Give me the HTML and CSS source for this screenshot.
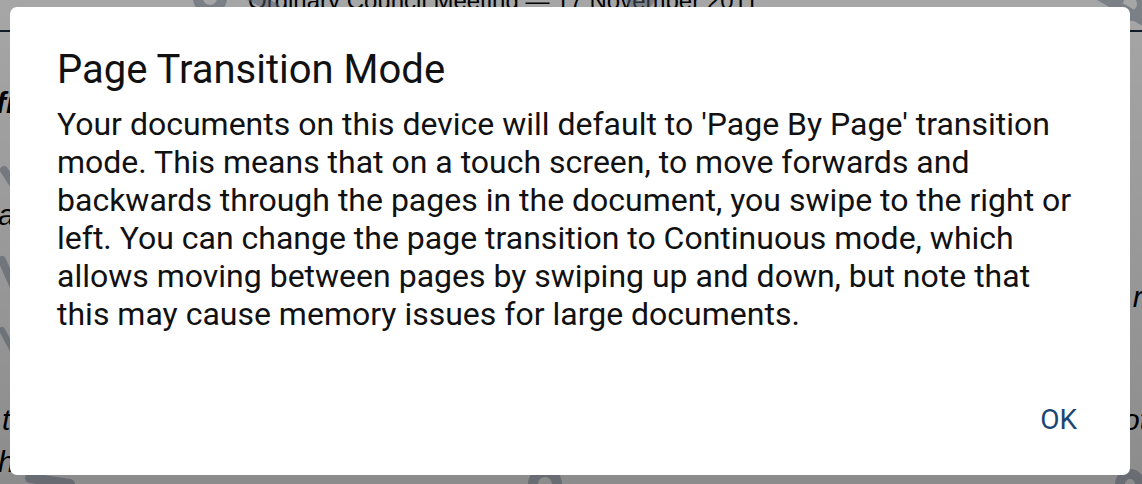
FILE: index.html
```html
<!DOCTYPE html>
<html lang="en">
<head>
<meta charset="utf-8">
<title>Page Transition Mode</title>
<link rel="stylesheet" href="styles.css">
</head>
<body>
<div class="doc">
  <div class="doc-header">Ordinary Council Meeting — 17 November 2011</div>
  <div class="doc-body">
    <p class="bold">fi</p>
    <p class="a">a</p>
    <p class="right">r.</p>
    <p class="row"><span>t</span><span>ot</span></p>
    <p class="last">h  and</p>
  </div>
  <svg class="watermark" width="1142" height="484" viewBox="0 0 1142 484">
    <g fill="none" stroke="#7d8ca3" stroke-width="10" stroke-linecap="round" opacity="0.5">
      <circle cx="210" cy="-2" r="12"/>
      <path d="M250 -4 L275 8"/>
      <circle cx="640" cy="-4" r="10"/>
      <circle cx="1130" cy="4" r="12"/>
      <path d="M1100 -4 L1142 20"/>
      <path d="M4 170 L30 210" stroke-width="8"/>
      <path d="M2 260 L24 310" stroke-width="8"/>
      <path d="M2 330 L18 360" stroke-width="6"/>
      <circle cx="545" cy="484" r="12"/>
      <circle cx="1130" cy="484" r="10"/>
      <path d="M30 478 L70 484"/>
    </g>
  </svg>
  <div class="scrim"></div>
</div>

<div class="dialog" role="dialog" aria-labelledby="dlg-title">
  <h1 class="dialog-title" id="dlg-title">Page Transition Mode</h1>
  <p class="dialog-message">Your documents on this device will default to 'Page By Page' transition mode. This means that on a touch screen, to move forwards and backwards through the pages in the document, you swipe to the right or left. You can change the page transition to Continuous mode, which allows moving between pages by swiping up and down, but note that this may cause memory issues for large documents.</p>
  <div class="dialog-actions">
    <button class="dialog-btn" type="button">OK</button>
  </div>
</div>
</body>
</html>
```

FILE: styles.css
```css
html, body {
  margin: 0;
  padding: 0;
}

body {
  width: 1142px;
  height: 484px;
  overflow: hidden;
  position: relative;
  font-family: Roboto, "Noto Sans", "Liberation Sans", sans-serif;
  background: #ffffff;
}

.doc {
  position: relative;
  width: 1142px;
  height: 484px;
  overflow: hidden;
  font-family: "Liberation Sans", Arial, sans-serif;
  color: #000;
}

.doc-header {
  box-sizing: border-box;
  height: 44px;
  margin-top: -12px;
  padding-left: 248px;
  border-bottom: 2px solid #1b2a40;
  font-size: 24px;
  line-height: 26px;
}

.doc-body {
  display: flex;
  flex-direction: column;
  font-style: italic;
  font-size: 30px;
  line-height: 34px;
  padding-left: 2px;
}

.doc-body p {
  margin: 0;
}

.doc-body .bold {
  font-weight: bold;
  margin-top: 54px;
  margin-left: -6px;
}

.doc-body .a {
  margin-top: 78px;
  margin-left: -4px;
}

.doc-body .right {
  margin-top: 48px;
  text-align: right;
  margin-right: -8px;
}

.doc-body .row {
  display: flex;
  justify-content: space-between;
  margin-top: 89px;
  margin-right: -6px;
}

.doc-body .last {
  margin-top: 8px;
  margin-left: -4px;
}

.watermark {
  position: absolute;
  left: 0;
  top: 0;
}

.scrim {
  position: absolute;
  inset: 0;
  background: linear-gradient(to bottom, rgba(0, 0, 0, 0.35), rgba(0, 0, 0, 0.45));
}

.dialog {
  position: absolute;
  left: 10px;
  top: 7px;
  width: 1120px;
  height: 468px;
  box-sizing: border-box;
  background: #ffffff;
  border-radius: 7px;
  padding: 39px 47px 37px 47px;
  display: flex;
  flex-direction: column;
  color: #111111;
}

.dialog-title {
  margin: 0;
  font-family: Roboto, "Noto Sans", sans-serif;
  font-weight: 400;
  font-size: 40px;
  line-height: 47px;
  color: #111111;
}

.dialog-message {
  margin: 12px 0 0 0;
  font-family: Roboto, "Noto Sans", sans-serif;
  font-size: 32px;
  line-height: 38px;
  color: #111111;
}

.dialog-actions {
  margin-top: auto;
  display: flex;
  justify-content: flex-end;
}

.dialog-btn {
  border: 0;
  background: transparent;
  padding: 0 6px;
  font-family: Roboto, "Noto Sans", sans-serif;
  font-size: 28px;
  line-height: 36px;
  color: #1a4674;
  cursor: pointer;
}
```
